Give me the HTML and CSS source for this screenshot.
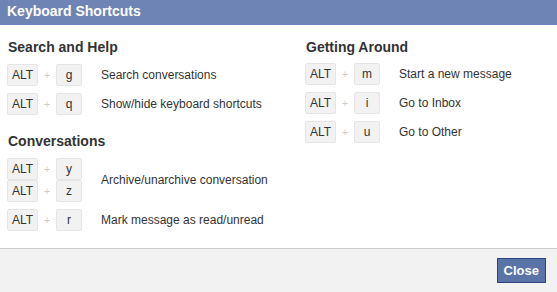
FILE: index.html
```html
<!DOCTYPE html>
<html lang="en">
<head>
<meta charset="utf-8"/>
<title>Keyboard Shortcuts</title>
<link rel="stylesheet" href="styles.css">
</head>
<body>
<div class="dialog">
  <div class="dialog-title">Keyboard Shortcuts</div>
  <div class="dialog-body">
    <div class="column">
      <h3>Search and Help</h3>
      <div class="shortcut">
        <div class="combos">
          <div class="combo"><span class="key alt">ALT</span><span class="plus">+</span><span class="key">g</span></div>
        </div>
        <div class="desc">Search conversations</div>
      </div>
      <div class="shortcut">
        <div class="combos">
          <div class="combo"><span class="key alt">ALT</span><span class="plus">+</span><span class="key">q</span></div>
        </div>
        <div class="desc">Show/hide keyboard shortcuts</div>
      </div>

      <h3 class="later">Conversations</h3>
      <div class="shortcut">
        <div class="combos">
          <div class="combo"><span class="key alt">ALT</span><span class="plus">+</span><span class="key">y</span></div>
          <div class="combo"><span class="key alt">ALT</span><span class="plus">+</span><span class="key">z</span></div>
        </div>
        <div class="desc">Archive/unarchive conversation</div>
      </div>
      <div class="shortcut">
        <div class="combos">
          <div class="combo"><span class="key alt">ALT</span><span class="plus">+</span><span class="key">r</span></div>
        </div>
        <div class="desc">Mark message as read/unread</div>
      </div>
    </div>

    <div class="column">
      <h3>Getting Around</h3>
      <div class="shortcut">
        <div class="combos">
          <div class="combo"><span class="key alt">ALT</span><span class="plus">+</span><span class="key">m</span></div>
        </div>
        <div class="desc">Start a new message</div>
      </div>
      <div class="shortcut">
        <div class="combos">
          <div class="combo"><span class="key alt">ALT</span><span class="plus">+</span><span class="key">i</span></div>
        </div>
        <div class="desc">Go to Inbox</div>
      </div>
      <div class="shortcut">
        <div class="combos">
          <div class="combo"><span class="key alt">ALT</span><span class="plus">+</span><span class="key">u</span></div>
        </div>
        <div class="desc">Go to Other</div>
      </div>
    </div>
  </div>
  <div class="dialog-footer">
    <button class="close-btn">Close</button>
  </div>
</div>
</body>
</html>
```

FILE: styles.css
```css
body {
  margin: 0;
  font-family: "Liberation Sans", Arial, sans-serif;
  color: #333;
  background: #fff;
}
.dialog {
  width: 557px;
  height: 292px;
  display: flex;
  flex-direction: column;
}
.dialog-title {
  height: 25px;
  line-height: 23px;
  padding-left: 7px;
  background: #6d84b4;
  color: #fff;
  font-size: 14px;
  font-weight: bold;
}
.dialog-body {
  flex: 1;
  display: flex;
  padding: 0 7px;
}
.column {
  flex: none;
  width: 298px;
}
.column + .column {
  flex: 1;
  width: auto;
}
.column + .column h3 {
  margin-bottom: 7px;
}
h3 {
  margin: 14px 0 8px 1px;
  font-size: 14px;
  font-weight: bold;
  color: #333;
  line-height: 17px;
}
h3.later {
  margin-top: 18px;
}
.shortcut {
  display: flex;
  align-items: center;
  margin-bottom: 7px;
}
.combos {
  width: 94px;
}
.combo {
  display: flex;
  align-items: center;
  height: 22px;
}
.key {
  box-sizing: border-box;
  height: 22px;
  width: 26px;
  line-height: 20px;
  text-align: center;
  font-size: 12px;
  background: #f2f2f2;
  border: 1px solid #e5e5e5;
  border-radius: 2px;
}
.key.alt {
  width: 31px;
}
.plus {
  width: 18px;
  text-align: center;
  font-size: 11px;
  color: #ccc;
}
.desc {
  font-size: 12px;
}
.dialog-footer {
  height: 43px;
  border-top: 1px solid #ccc;
  background: #f2f2f2;
  display: flex;
  align-items: center;
  justify-content: flex-end;
  padding-right: 11px;
}
.close-btn {
  height: 25px;
  padding: 0 6px;
  background: #5b74a8;
  border: 1px solid #29447e;
  color: #fff;
  font-family: "Liberation Sans", Arial, sans-serif;
  font-size: 13px;
  font-weight: bold;
}
```
